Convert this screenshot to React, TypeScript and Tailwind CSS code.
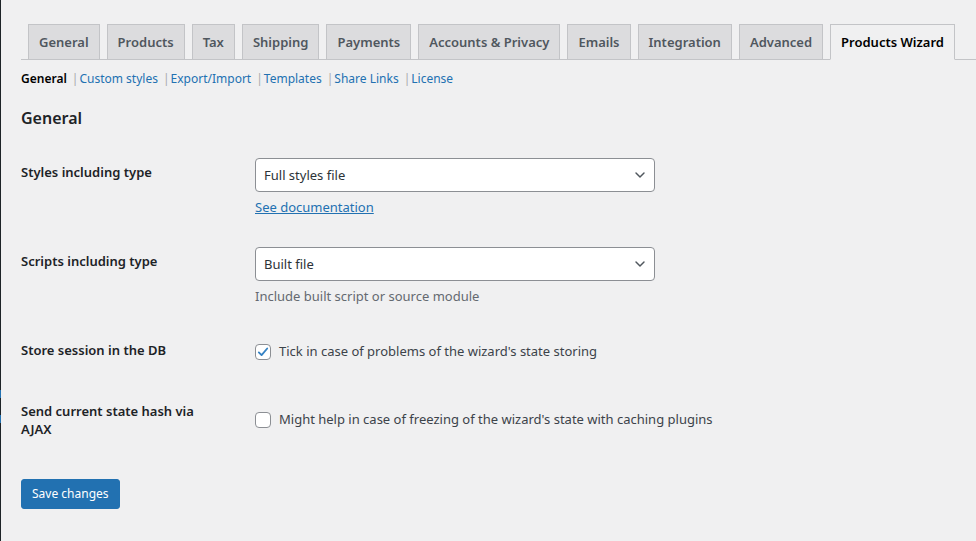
import React from 'react';

const TABS = [
  'General',
  'Products',
  'Tax',
  'Shipping',
  'Payments',
  'Accounts & Privacy',
  'Emails',
  'Integration',
  'Advanced',
  'Products Wizard',
];

const SUBNAV = ['General', 'Custom styles', 'Export/Import', 'Templates', 'Share Links', 'License'];

const Chevron = () => (
  <svg width="16" height="16" viewBox="0 0 20 20" className="text-[#50575e]" aria-hidden="true">
    <path d="M5 7.5l5 5 5-5" fill="none" stroke="currentColor" strokeWidth="1.8" strokeLinecap="round" strokeLinejoin="round" />
  </svg>
);

const FakeSelect: React.FC<{ value: string }> = ({ value }) => (
  <div className="flex h-[34px] w-[400px] items-center justify-between rounded-[4px] border border-[#8c8f94] bg-white pl-2 pr-[6px] text-[13px] text-[#2c3338]">
    <span className="pt-px">{value}</span>
    <Chevron />
  </div>
);

const Checkbox: React.FC<{ checked?: boolean }> = ({ checked }) => (
  <span className="flex h-4 w-4 shrink-0 items-center justify-center rounded-[4px] border border-[#8c8f94] bg-white">
    {checked && (
      <svg width="14" height="14" viewBox="0 0 20 20" aria-hidden="true">
        <path d="M4 10.5l4 4L16 5" fill="none" stroke="#3582c4" strokeWidth="2.6" strokeLinecap="round" strokeLinejoin="round" />
      </svg>
    )}
  </span>
);

const Row: React.FC<{ label: React.ReactNode; children: React.ReactNode; contentClass?: string }> = ({
  label,
  children,
  contentClass = 'py-[15px]',
}) => (
  <div className="flex">
    <div className="w-[234px] shrink-0 py-5 pr-6 text-[13px] font-semibold leading-[18px] text-[#1d2327]">{label}</div>
    <div className={contentClass}>{children}</div>
  </div>
);

export default function App() {
  return (
    <div
      className="relative min-h-[541px] bg-[#f0f0f1] pl-[21px] text-[12px] text-[#3c434a]"
      style={{ fontFamily: '"Noto Sans", "Open Sans", sans-serif' }}
    >
      {/* admin menu edge */}
      <div className="absolute left-0 top-0 h-full w-px bg-[#1d2327]">
        <div className="mt-[390px] h-2 w-px bg-[#2271b1]" />
        <div className="mt-[17px] h-2 w-px bg-[#2271b1]" />
      </div>

      <div className="flex flex-nowrap border-b border-[#c3c4c7] pt-6">
        {TABS.map((tab, i) => {
          const active = i === TABS.length - 1;
          return (
            <div
              key={tab}
              className={`-mb-px ml-[7px] shrink-0 whitespace-nowrap border px-[10px] py-[5px] text-[13px] font-semibold leading-6 ${
                active
                  ? 'border-[#c3c4c7] border-b-[#f0f0f1] bg-[#f0f0f1] text-black'
                  : 'border-[#c3c4c7] bg-[#dcdcde] text-[#50575e]'
              }`}
            >
              {tab}
            </div>
          );
        })}
      </div>

      <div className="mt-[6px] flex text-[12px] leading-[26px]">
        {SUBNAV.map((item, i) => (
          <span key={item} className="flex">
            {i > 0 && <span className="ml-[5px] mr-[1px] text-[#a7aaad]">|</span>}
            {i === 0 ? (
              <span className="font-semibold text-black">{item}</span>
            ) : (
              <a className="text-[#2271b1]">{item}</a>
            )}
          </span>
        ))}
      </div>

      <h2 className="mt-[15px] text-[16px] font-semibold leading-[22px] text-[#1d2327]">General</h2>

      <div className="mt-[14px]">
        <Row label="Styles including type">
          <FakeSelect value="Full styles file" />
          <p className="mt-[5px] text-[13px] leading-[20px]">
            <a className="text-[#2271b1] underline">See documentation</a>
          </p>
        </Row>

        <Row label="Scripts including type">
          <FakeSelect value="Built file" />
          <p className="mt-[5px] text-[13px] leading-[20px] text-[#646970]">Include built script or source module</p>
        </Row>

        <Row label="Store session in the DB" contentClass="pt-[19px] pb-[18px]">
          <label className="flex h-6 items-center gap-2 text-[13px] text-[#3c434a]">
            <Checkbox checked />
            Tick in case of problems of the wizard's state storing
          </label>
        </Row>

        <Row label={<>Send current state hash via<br />AJAX</>} contentClass="pt-[26px]">
          <label className="flex h-6 items-center gap-2 text-[13px] text-[#3c434a]">
            <Checkbox />
            Might help in case of freezing of the wizard's state with caching plugins
          </label>
        </Row>
      </div>

      <button className="mt-[21px] h-[30px] rounded-[3px] border border-[#2271b1] bg-[#2271b1] px-[10px] text-[12px] text-white">
        Save changes
      </button>
    </div>
  );
}
